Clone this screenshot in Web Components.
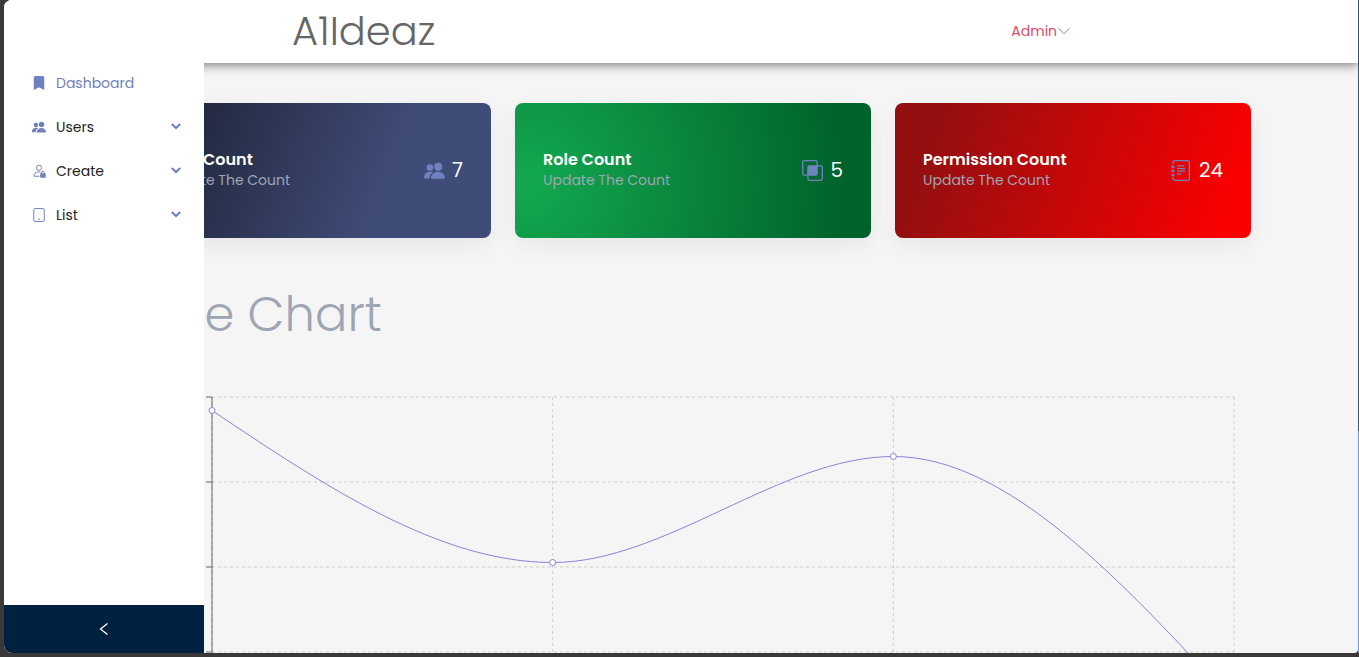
<!DOCTYPE html>
<html lang="en">
<head>
<meta charset="utf-8">
<title>A1Ideaz Dashboard</title>
<style>
html, body { height: 100%; margin: 0; }
body { font-family: Poppins, Inter, "Open Sans", sans-serif; background: #3a3938; overflow: hidden; }
</style>
</head>
<body>
<app-shell>
  <app-header slot="header" brand="A1Ideaz" user="Admin"></app-header>
  <side-bar slot="sidebar">
    <nav-item icon="bookmark" link>Dashboard</nav-item>
    <nav-item icon="people">Users</nav-item>
    <nav-item icon="lock">Create</nav-item>
    <nav-item icon="tablet">List</nav-item>
  </side-bar>
  <card-row>
    <stat-card tone="blue" icon="people" value="7">User Count</stat-card>
    <stat-card tone="green" icon="intersect" value="5">Role Count</stat-card>
    <stat-card tone="red" icon="journal" value="24">Permission Count</stat-card>
  </card-row>
  <line-chart>Line Chart</line-chart>
</app-shell>

<script>
const ICONS = {
  bookmark: '<path fill="currentColor" d="M2 2a2 2 0 0 1 2-2h8a2 2 0 0 1 2 2v14l-6-3.2L2 16z"/>',
  people: '<g fill="currentColor"><circle cx="10.9" cy="5.1" r="3.1"/><path d="M6.1 14.2c-.6 0-.9-.5-.8-1C5.8 10.6 8.2 9 10.9 9s4.5 1.6 5.1 4.2c.1.5-.2 1-.8 1z"/><circle cx="4.5" cy="5.7" r="2.5"/><path d="M7.1 9.3C6.3 9 5.4 8.9 4.5 8.9 2.3 8.9.5 10.2 0 12.6c-.1.8.1 1.5.7 1.5h3.5c-.2-2.1.9-3.8 2.9-4.8z"/></g>',
  lock: '<g fill="none" stroke="currentColor" stroke-width="1.1"><circle cx="8" cy="4.3" r="3"/><path d="M8.3 14H2.2c0-3 2-4.9 5-4.9 1 0 1.8.1 2.5.4"/><path d="M10.8 11v-1a1.700 1.700 0 0 1 3.400 0v1"/></g><rect x="9.3" y="10.7" width="6.4" height="5" rx=".8" fill="currentColor"/>',
  tablet: '<rect x="2" y=".6" width="12" height="14.8" rx="1.5" fill="none" stroke="currentColor" stroke-width="1.1"/><path fill="currentColor" d="M7 12.2h2v1.200H7z"/>',
  intersect: '<g fill="none" stroke="currentColor"><rect x=".5" y=".5" width="11" height="11" rx="1.3"/><rect x="4.5" y="4.5" width="11" height="11" rx="1.3"/></g><rect x="4.5" y="4.5" width="7" height="7" fill="currentColor"/>',
  journal: '<g fill="none" stroke="currentColor"><path d="M1.500 3V2A1.500 1.500 0 0 1 3 .5h9.500A1.500 1.500 0 0 1 14 2v12a1.500 1.500 0 0 1-1.500 1.500H3A1.500 1.500 0 0 1 1.500 14v-1M1.500 4v2.500M1.500 7.500v2M1.500 10.500v2M0 5.200h3M0 8.300h3M0 11.500h3M4.700 4.500h5.500M4.700 6.500h6M4.700 8.500h6M4.700 10.500h3"/></g>'
};
const icon = (name, size) => `<svg width="${size}" height="${size}" viewBox="0 0 16 16" aria-hidden="true">${ICONS[name]}</svg>`;

class Base extends HTMLElement {
  connectedCallback() {
    if (this.shadowRoot) return;
    this.attachShadow({ mode: 'open' }).innerHTML = this.render();
    this.ready?.();
  }
}

customElements.define('app-shell', class extends Base {
  render() {
    return `<style>
      :host { display: flex; box-sizing: border-box; height: 100vh; padding: 0 0 4px 4px; }
      .window { position: relative; flex: 1; display: flex; flex-direction: column; overflow: hidden; background: #f5f5f5; border-radius: 8px 0 4px 8px; }
      main { flex: 1; min-height: 0; overflow: hidden; padding: 40px 107px 0 131px; }
      .track { width: 1px; background: #3f4c77; display: flex; flex-direction: column; justify-content: flex-end; }
      .thumb { height: 34%; background: #7f93d8; }
    </style>
    <div class="window"><slot name="header"></slot><main><slot></slot></main><slot name="sidebar"></slot></div>
    <div class="track"><div class="thumb"></div></div>`;
  }
});

customElements.define('app-header', class extends Base {
  render() {
    return `<style>
      :host { position: relative; flex: none; box-sizing: border-box; display: flex; justify-content: space-around; align-items: center; height: 63px; padding-bottom: 2px; background: #fff; box-shadow: 0 2px 10px rgba(0,0,0,.5); }
      .brand { font-size: 40px; line-height: 60px; font-weight: 300; color: #666; }
      button { display: flex; align-items: center; gap: 1px; padding: 0; border: 0; background: none; font: 400 14px/20px Poppins, Inter, sans-serif; color: #dc4c6c; }
      svg { color: #7385c4; }
    </style>
    <div class="brand">${this.getAttribute('brand')}</div>
    <button type="button">${this.getAttribute('user')}<svg width="12" height="12" viewBox="0 0 12 12" aria-hidden="true"><path d="M.7 3.3 6 8.7l5.3-5.4" fill="none" stroke="currentColor"/></svg></button>`;
  }
});

customElements.define('side-bar', class extends Base {
  render() {
    return `<style>
      :host { position: absolute; top: 0; bottom: 0; left: 0; width: 200px; display: flex; flex-direction: column; background: #fff; }
      nav { flex: 1; padding-top: 61px; }
      button { height: 48px; padding: 0; border: 0; background: #002140; color: #fff; display: flex; align-items: center; justify-content: center; }
    </style>
    <nav><slot></slot></nav>
    <button type="button" aria-label="Collapse sidebar"><svg width="14" height="14" viewBox="0 0 14 14" aria-hidden="true"><path d="M10.5 1.5 3.5 7l7 5.500" fill="none" stroke="currentColor" stroke-width="1.3"/></svg></button>`;
  }
});

customElements.define('nav-item', class extends Base {
  render() {
    const link = this.hasAttribute('link');
    const tag = link ? 'a href="#dashboard"' : 'button type="button" aria-expanded="false"';
    return `<style>
      :host { display: block; }
      a, button { box-sizing: border-box; width: 100%; height: 44px; display: flex; align-items: center; gap: 10px; padding: 0 22px 0 28px; border: 0; background: none; text-decoration: none; text-align: left; font: 400 14px/20px Poppins, Inter, sans-serif; color: #222; }
      a { color: #7080bd; }
      span { flex: 1; }
      svg { color: #6f80bf; flex: none; }
    </style>
    <${tag}>${icon(this.getAttribute('icon'), 14)}<span><slot></slot></span>${link ? '' : '<svg width="12" height="12" viewBox="0 0 12 12" aria-hidden="true"><path d="M1.8 3 6 7l4.2-4" fill="none" stroke="currentColor" stroke-width="2"/></svg>'}</${link ? 'a' : 'button'}>`;
  }
});

customElements.define('card-row', class extends Base {
  render() {
    return `<style>:host { display: grid; grid-template-columns: repeat(3, 1fr); gap: 24px; }</style><slot></slot>`;
  }
});

customElements.define('stat-card', class extends Base {
  render() {
    return `<style>
      :host { box-sizing: border-box; height: 135px; padding: 0 28px 1px; display: flex; align-items: center; justify-content: space-between; border-radius: 8px; box-shadow: 0 8px 24px rgba(0,0,0,.06); color: #fff; white-space: nowrap; }
      :host([tone=blue]) { background: linear-gradient(112deg, #20253a 11%, #404c78 70%); }
      :host([tone=green]) { background: radial-gradient(circle at 4% 60%, #13a950, #00622b 90%); }
      :host([tone=red]) { background: linear-gradient(110deg, #930f10 11%, #fa0000 92%); }
      h2 { margin: 0; font-size: 16px; line-height: 20px; font-weight: 600; }
      p { margin: 0; font-size: 14px; line-height: 20px; color: #9ea5b4; }
      .stat { display: flex; align-items: center; gap: 7px; font-size: 20px; line-height: 24px; }
      svg { color: #7081bf; }
    </style>
    <div><h2><slot></slot></h2><p>Update The Count</p></div>
    <div class="stat">${icon(this.getAttribute('icon'), 21)}<span>${this.getAttribute('value')}</span></div>`;
  }
});

customElements.define('line-chart', class extends Base {
  render() {
    return `<style>
      :host { display: block; padding: 41px 12px 0 8px; }
      h1 { margin: 0 0 41px; font-size: 48px; line-height: 72px; font-weight: 300; color: #9ea5b4; }
      svg { display: block; width: 100%; height: 380px; }
    </style>
    <h1><slot></slot></h1><svg role="img" aria-label="Line chart"></svg>`;
  }
  ready() {
    this.svg = this.shadowRoot.querySelector('svg');
    this.draw();
    new ResizeObserver(() => this.draw()).observe(this.svg);
  }
  draw() {
    const left = 69, top = 5, row = 85;
    const width = this.svg.getBoundingClientRect().width - left - 5;
    if (width <= 0) return;
    const step = width / 3;
    const xs = [0, 1, 2, 3].map(i => left + i * step);
    const ys = [18.5, 170.5, 64.5, 310.5];
    const rows = [0, 1, 2, 3, 4].map(i => top + i * row);
    const right = left + width, bottom = rows[4];
    const grid = rows.map(y => `M${left} ${y}H${right}`).join('') + xs.map(x => `M${x} ${top}V${bottom}`).join('');
    const ticks = rows.map(y => `M${left - 6} ${y}h6`).join('');
    const c = step / 3;
    const curve = `M${xs[0]} ${ys[0]}C${xs[0] + c} ${ys[0] + (ys[1] - ys[0]) / 2} ${xs[1] - c} ${ys[1]} ${xs[1]} ${ys[1]}`
      + `C${xs[1] + c} ${ys[1]} ${xs[2] - c} ${ys[2]} ${xs[2]} ${ys[2]}`
      + `C${xs[2] + c} ${ys[2]} ${xs[3] - c} ${(ys[2] + ys[3]) / 2} ${xs[3]} ${ys[3]}`;
    this.svg.innerHTML = `<path d="${grid}" fill="none" stroke="#ccc" stroke-dasharray="3 3"/>
      <path d="${ticks}M${left} ${top}V${bottom}" fill="none" stroke="#666"/>
      <path d="${curve}" fill="none" stroke="#8884d8"/>`
      + xs.map((x, i) => `<circle cx="${x}" cy="${ys[i]}" r="3" fill="#fff" stroke="#8884d8"/>`).join('');
  }
});
</script>
</body>
</html>
